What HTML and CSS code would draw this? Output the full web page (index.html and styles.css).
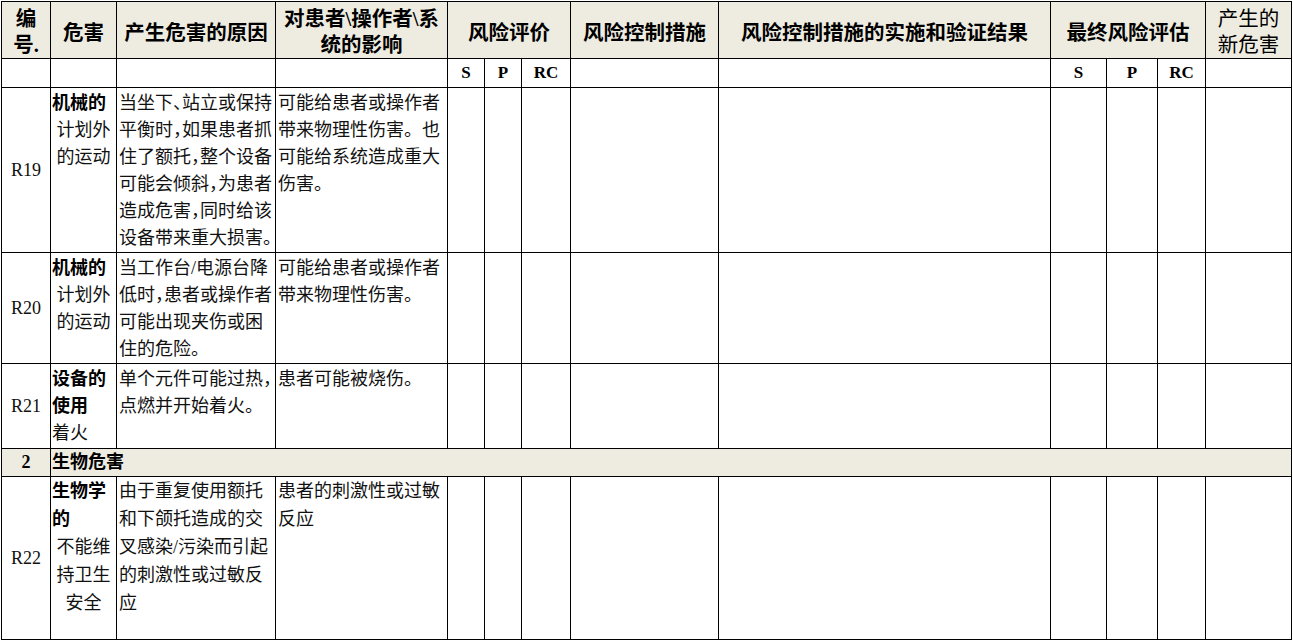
FILE: index.html
```html
<!DOCTYPE html>
<html lang="zh-CN">
<head>
<meta charset="utf-8">
<title>风险分析表</title>
<link rel="stylesheet" href="styles.css">
</head>
<body>
<table class="risk">
  <colgroup>
    <col class="w1"><col class="w2"><col class="w3"><col class="w4">
    <col class="w5"><col class="w6"><col class="w7"><col class="w8">
    <col class="w9"><col class="w10"><col class="w11"><col class="w12"><col class="w13">
  </colgroup>
  <thead>
    <tr class="hr1">
      <th class="two">编<br>号.</th>
      <th class="one">危害</th>
      <th class="one">产生危害的原因</th>
      <th class="two">对患者\操作者\系<br>统的影响</th>
      <th class="one" colspan="3">风险评价</th>
      <th class="one">风险控制措施</th>
      <th class="one">风险控制措施的实施和验证结果</th>
      <th class="one" colspan="3">最终风险评估</th>
      <th class="two light">产生的<br>新危害</th>
    </tr>
    <tr class="hr2">
      <td></td><td></td><td></td><td></td>
      <td class="sp">S</td><td class="sp">P</td><td class="sp">RC</td>
      <td></td><td></td>
      <td class="sp">S</td><td class="sp">P</td><td class="sp">RC</td>
      <td></td>
    </tr>
  </thead>
  <tbody>
    <tr class="r19">
      <td class="id">R19</td>
      <td class="haz"><div class="bl">机械的</div><div class="ctr">计划外<br>的运动</div></td>
      <td class="txt cause">当坐下、站立或保持<br>平衡时，如果患者抓<br>住了额托，整个设备<br>可能会倾斜，为患者<br>造成危害，同时给该<br>设备带来重大损害。</td>
      <td class="txt">可能给患者或操作者<br>带来物理性伤害。也<br>可能给系统造成重大<br>伤害。</td>
      <td></td><td></td><td></td><td></td><td></td><td></td><td></td><td></td><td></td>
    </tr>
    <tr class="r20">
      <td class="id">R20</td>
      <td class="haz"><div class="bl">机械的</div><div class="ctr">计划外<br>的运动</div></td>
      <td class="txt cause">当工作台/电源台降<br>低时，患者或操作者<br>可能出现夹伤或困<br>住的危险。</td>
      <td class="txt">可能给患者或操作者<br>带来物理性伤害。</td>
      <td></td><td></td><td></td><td></td><td></td><td></td><td></td><td></td><td></td>
    </tr>
    <tr class="r21">
      <td class="id">R21</td>
      <td class="haz"><div class="bl">设备的<br>使用</div><div>着火</div></td>
      <td class="txt cause">单个元件可能过热，<br>点燃并开始着火。</td>
      <td class="txt">患者可能被烧伤。</td>
      <td></td><td></td><td></td><td></td><td></td><td></td><td></td><td></td><td></td>
    </tr>
    <tr class="sec">
      <td class="id b">2</td>
      <td class="sect" colspan="12">生物危害</td>
    </tr>
    <tr class="r22">
      <td class="id">R22</td>
      <td class="haz"><div class="bl">生物学<br>的</div><div class="ctr">不能维<br>持卫生<br>安全</div></td>
      <td class="txt cause">由于重复使用额托<br>和下颌托造成的交<br>叉感染/污染而引起<br>的刺激性或过敏反<br>应</td>
      <td class="txt">患者的刺激性或过敏<br>反应</td>
      <td></td><td></td><td></td><td></td><td></td><td></td><td></td><td></td><td></td>
    </tr>
  </tbody>
</table>
</body>
</html>
```

FILE: styles.css
```css
body {
  margin: 0;
  background: #ffffff;
  color: #000000;
  font-family: "Liberation Serif", "Noto Sans CJK SC", serif;
}

.risk {
  border-collapse: collapse;
  table-layout: fixed;
  width: 1290px;
  margin: 1px 0 0 1px;
}

.w1 { width: 49px; }
.w2 { width: 66px; }
.w3 { width: 159px; }
.w4 { width: 172px; }
.w5 { width: 37px; }
.w6 { width: 37px; }
.w7 { width: 49px; }
.w8 { width: 148px; }
.w9 { width: 332px; }
.w10 { width: 56px; }
.w11 { width: 51px; }
.w12 { width: 48px; }
.w13 { width: 86px; }

.risk th,
.risk td {
  border: 1px solid #000000;
  padding: 0;
  overflow: visible;
}

/* header */
.hr1 { height: 57px; }
.hr1 th {
  background: #eeece1;
  font-size: 20.5px;
  font-weight: 700;
  line-height: 27px;
  text-align: center;
  vertical-align: middle;
  white-space: nowrap;
}
.hr1 th.one { padding-top: 6px; }
.hr1 th.two { padding-top: 3px; line-height: 26px; }
.hr1 th.light { font-weight: 400; }

.hr2 { height: 29px; }
.hr2 td.sp {
  font-size: 17px;
  font-weight: 700;
  text-align: center;
  vertical-align: middle;
}

/* body rows */
.r19 { height: 165px; }
.r20 { height: 110px; }
.r21 { height: 85px; }
.sec { height: 28px; }
.r22 { height: 163px; }

.risk tbody td {
  font-size: 18px;
  line-height: 27px;
  vertical-align: top;
  color: #111111;
}
.risk tbody .r22 td { line-height: 28px; }

.risk tbody td.id {
  text-align: center;
  vertical-align: middle;
  font-size: 18px;
}

.risk tbody td.haz {
  padding: 2px 1px 0 1px;
  white-space: nowrap;
}
.risk tbody .r22 td.haz,
.risk tbody .r22 td.txt { padding-top: 0; }

.haz .bl { font-weight: 700; text-align: left; color: #000000; }
.haz .ctr { text-align: center; }

.risk tbody td.txt {
  padding: 2px 0 0 2px;
  white-space: nowrap;
}
.risk tbody td.cause { font-feature-settings: "halt"; }

.sec td {
  background: #eeece1;
  vertical-align: middle;
}
.risk tbody .sec td.b { font-weight: 700; color: #000000; }
.risk tbody .sec td.sect {
  font-weight: 700;
  padding-left: 1px;
  vertical-align: middle;
  color: #000000;
}
```
